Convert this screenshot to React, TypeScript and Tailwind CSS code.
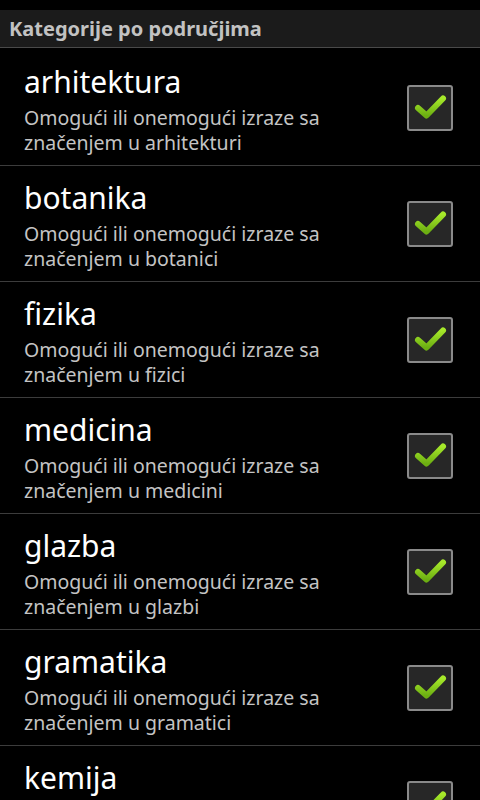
const items = [
  { title: "arhitektura", desc: "arhitekturi", checked: true },
  { title: "botanika", desc: "botanici", checked: true },
  { title: "fizika", desc: "fizici", checked: true },
  { title: "medicina", desc: "medicini", checked: true },
  { title: "glazba", desc: "glazbi", checked: true },
  { title: "gramatika", desc: "gramatici", checked: true },
  { title: "kemija", desc: "kemiji", checked: true },
];

function CheckBox({ checked }: { checked: boolean }) {
  return (
    <div className="w-[46px] h-[46px] shrink-0 rounded-[3px] border-2 border-[#8a8a8a] bg-[#272727] flex items-center justify-center">
      {checked && (
        <svg width="46" height="46" viewBox="0 0 46 46" className="-m-[2px]">
          <defs>
            <linearGradient id="chk" x1="0" y1="0" x2="0" y2="1">
              <stop offset="0" stopColor="#a6e82a" />
              <stop offset="1" stopColor="#6cae12" />
            </linearGradient>
          </defs>
          <path
            d="M11 23 L19.5 30.5 L36 13.5"
            fill="none"
            stroke="url(#chk)"
            strokeWidth="6"
            strokeLinecap="round"
            strokeLinejoin="round"
          />
        </svg>
      )}
    </div>
  );
}

export default function App() {
  return (
    <div
      className="w-[480px] h-[800px] overflow-hidden bg-black"
      style={{ fontFamily: '"Noto Sans", "Open Sans", sans-serif' }}
    >
      <div className="h-[10px] bg-black" />
      <div className="h-[38px] bg-[#1b1b1b] border-b border-[#4a4a4a] flex items-center px-[9px]">
        <span className="text-[20px] font-bold text-[#c2c2c2] leading-none">
          Kategorije po područjima
        </span>
      </div>
      <div className="h-[2px]" />
      {items.map((it) => (
        <div
          key={it.title}
          className="h-[116px] shrink-0 border-b border-[#3c3c3c] flex pl-[24px] pr-[27px]"
        >
          <div className="flex-1 flex flex-col pt-[14px]">
            <span className="text-[30px] leading-[36px] text-white">{it.title}</span>
            <span className="mt-[5px] text-[19.5px] leading-[25px] text-[#c4c4c4]">
              Omogući ili onemogući izraze sa
              <br />
              značenjem u {it.desc}
            </span>
          </div>
          <div className="self-center">
            <CheckBox checked={it.checked} />
          </div>
        </div>
      ))}
    </div>
  );
}
